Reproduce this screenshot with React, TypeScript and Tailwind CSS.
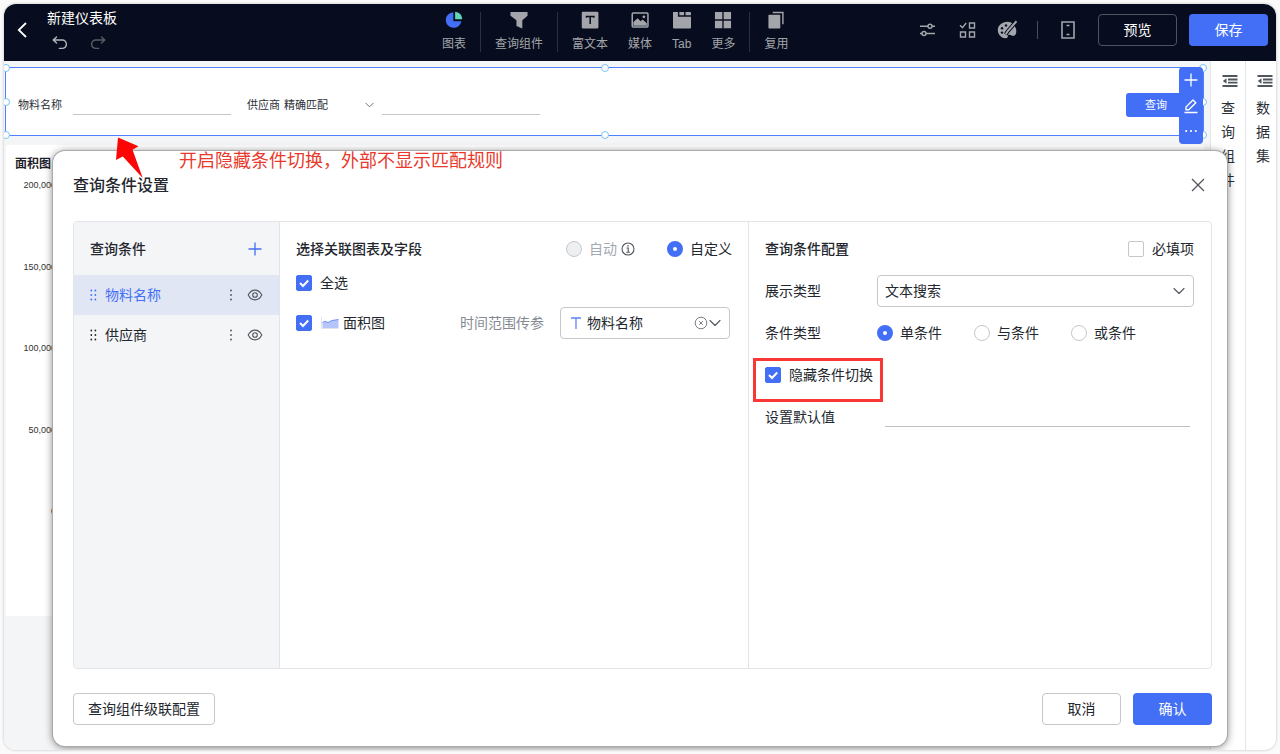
import type { ReactNode } from "react";

type IconProps = { className?: string };

const ChevronDown = ({ className = "" }: IconProps) => (
  <svg className={className} viewBox="0 0 12 8" fill="none" stroke="currentColor" strokeWidth="1.1" strokeLinecap="round" strokeLinejoin="round">
    <path d="M1 1.500 6 6.500 11 1.500" />
  </svg>
);

const Plus = ({ className = "" }: IconProps) => (
  <svg className={className} viewBox="0 0 14 14" fill="none" stroke="currentColor" strokeWidth="1.3">
    <path d="M7 .5v13M.5 7h13" />
  </svg>
);

const Undo = ({ className = "" }: IconProps) => (
  <svg className={className} viewBox="0 0 16 14" fill="none" stroke="currentColor" strokeWidth="1.4" strokeLinecap="round" strokeLinejoin="round">
    <path d="M4.500 1 1.200 4l3.300 3M1.400 4h8.800a4.200 4.200 0 0 1 0 8.400H7.400" />
  </svg>
);

const Eye = ({ className = "" }: IconProps) => (
  <svg className={className} viewBox="0 0 16 12" fill="none" stroke="currentColor" strokeWidth="1.1">
    <path d="M1.200 6C2.800 2.900 5.200 1.100 8 1.100S13.200 2.900 14.800 6C13.200 9.100 10.800 10.900 8 10.900S2.800 9.100 1.200 6Z" strokeLinejoin="round" />
    <circle cx="8" cy="6" r="2.300" />
  </svg>
);

const Kebab = ({ className = "" }: IconProps) => (
  <svg className={className} viewBox="0 0 4 12" fill="currentColor">
    <circle cx="2" cy="1.500" r=".9" />
    <circle cx="2" cy="6" r=".9" />
    <circle cx="2" cy="10.500" r=".9" />
  </svg>
);

const Grip = ({ className = "" }: IconProps) => (
  <svg className={className} viewBox="0 0 7 12" fill="currentColor">
    {[1.5, 6, 10.5].map((y) => (
      <g key={y}>
        <circle cx="1.300" cy={y} r=".9" />
        <circle cx="5.400" cy={y} r=".9" />
      </g>
    ))}
  </svg>
);

const Outdent = ({ className = "" }: IconProps) => (
  <svg className={className} viewBox="0 0 16 14" fill="currentColor">
    <path d="M.5 1h15v2H.5zM6 4.600h9.500v1.800H6zM6 7.800h9.500v1.800H6zM.5 11h15v2H.5zM4.500 4.300v5.400L.8 7z" />
  </svg>
);

const toolIcons: Record<string, ReactNode> = {
  chart: (
    <>
      <path d="M8.800 1.200A8.300 8.300 0 1 0 17.300 10.800H8.800z" fill="#436ff6" />
      <path d="M10.700 .8v8h7.500A7.800 7.800 0 0 0 10.700 .8z" fill="#5fd8b8" />
    </>
  ),
  filter: <path d="M.5 1h18v4l-5.500 4.700V18.500l-6.200-2.700v-6.100L.5 5z" />,
  text: (
    <>
      <rect x=".8" y=".8" width="17.600" height="17.600" rx="1.200" />
      <path d="M5.800 7.200V5.700h7.800v1.500M9.700 5.700v8.100" stroke="#070d1e" strokeWidth="1.600" fill="none" />
    </>
  ),
  media: (
    <>
      <rect x="1.300" y="2.200" width="16.600" height="14.600" rx="1" fill="none" stroke="currentColor" strokeWidth="1.600" />
      <path d="M2.500 15.500v-4l4.500-3.800 3.200 3.200 2-2 4.500 4v2.600z" />
      <circle cx="13.600" cy="6.200" r="1.500" />
    </>
  ),
  tab: <path d="M0 1h5.200v5.200h13.800V17.500a1 1 0 0 1-1 1H1a1 1 0 0 1-1-1zM6.700 1h5v3.500h-5zM13.200 1h4.800a1 1 0 0 1 1 1v2.500h-5.800z" />,
  more: <path d="M1 1h7.800v7.800H1zM10.200 1h7.800v7.800h-7.800zM1 10.400h7.800v7.800H1zM10.200 10.400h7.800v7.800h-7.800z" />,
  reuse: (
    <>
      <rect x="1.500" y="4" width="12.500" height="14.500" rx=".8" />
      <path d="M6 1.600h10.800v12.400" fill="none" stroke="currentColor" strokeWidth="1.500" />
    </>
  ),
};

const toolGroups = [
  [{ icon: "chart", label: "图表" }],
  [{ icon: "filter", label: "查询组件" }],
  [
    { icon: "text", label: "富文本" },
    { icon: "media", label: "媒体" },
    { icon: "tab", label: "Tab" },
    { icon: "more", label: "更多" },
  ],
  [{ icon: "reuse", label: "复用" }],
];

function IconButton({ label, children }: { label: string; children: ReactNode }) {
  return (
    <button type="button" aria-label={label} className="size-5 shrink-0 text-[#a3a6ad]">
      <svg viewBox="0 0 20 20" className="size-5" fill="none" stroke="currentColor" strokeWidth="1.4">
        {children}
      </svg>
    </button>
  );
}

function TopBar() {
  return (
    <header className="flex h-[57px] shrink-0 bg-[#070d1e] text-white">
      <div className="flex w-[438px] shrink items-start pl-3">
        <button type="button" aria-label="返回" className="mt-[18px] flex h-4 w-3 items-center justify-center">
          <svg viewBox="0 0 10 16" className="h-4 w-[10px]" fill="none" stroke="currentColor" strokeWidth="1.800">
            <path d="M9 1 1.800 8 9 15" />
          </svg>
        </button>
        <div className="ml-[19px] pt-1">
          <h1 className="text-sm leading-5">新建仪表板</h1>
          <div className="mt-2 flex gap-[22px] pl-[5px]">
            <button type="button" aria-label="撤销" className="text-[#b4b6bb]">
              <Undo className="h-[14px] w-4" />
            </button>
            <button type="button" aria-label="重做" className="text-[#5a5d66]">
              <Undo className="h-[14px] w-4 -scale-x-100" />
            </button>
          </div>
        </div>
      </div>
      <nav className="flex h-[55px] shrink-0 items-center">
        {toolGroups.map((group, i) => (
          <div key={i} className="flex items-center">
            {i > 0 && <span className="mx-[14px] h-10 w-px bg-[#2b3040]" />}
            <div className="flex gap-5">
              {group.map((t) => (
                <button type="button" key={t.label} className="flex flex-col items-center gap-[7px] text-xs leading-4 text-[#a3a5aa]">
                  <svg viewBox="0 0 19 19" className="size-[18px]" fill="currentColor">
                    {toolIcons[t.icon]}
                  </svg>
                  {t.label}
                </button>
              ))}
            </div>
          </div>
        ))}
      </nav>
      <div className="ml-auto flex h-[52px] items-center gap-5 pr-2">
        <IconButton label="参数">
          <path d="M3 6.300h8M15 6.300h3M3 13.500h2.300M9 13.500h9" />
          <circle cx="13" cy="6.300" r="2" />
          <circle cx="7" cy="13.500" r="2" />
        </IconButton>
        <IconButton label="批量">
          <path d="m3 5.200 2.500 2.500L9.200 3M12.500 3h5v5h-5zM3.500 12h5v5h-5zM12.500 12h5v5h-5z" />
        </IconButton>
        <IconButton label="主题">
          <path d="M10.500 1.800C5 1.800.8 5.500.8 10s3.600 8.300 7.800 8.300c2.200 0 2.200-1.500 2.200-2.300 0-1 .9-1.700 2.100-1.200 1.500.6 3.100 1.800 4.600.8 1.900-1.200 2.100-4.300 1.500-6.600-.9-4-4.500-7.200-8.500-7.200z" fill="currentColor" stroke="none" />
          <g fill="#070d1e" stroke="none">
            <circle cx="5" cy="8.200" r="1.200" />
            <circle cx="9" cy="5.400" r="1.200" />
            <circle cx="5" cy="12.600" r="1.200" />
          </g>
          <path d="m19.500 1.200-9.200 10.600-1.500 2.600" stroke="#070d1e" strokeWidth="4" />
          <path d="m19.500 1.200-8.700 9.900M10.800 11l-2 3.200" strokeWidth="2" />
        </IconButton>
        <span className="h-[18px] w-px bg-[#4a4e5b]" />
        <IconButton label="移动端">
          <path d="M4 2h12v16H4zM8.500 5.500h3M8.500 14.500h3" strokeWidth="1.600" />
        </IconButton>
        <div className="flex gap-3">
          <button type="button" className="h-8 w-[79px] rounded border border-[#50535e] text-sm">预览</button>
          <button type="button" className="h-8 w-[79px] rounded bg-[#436ff6] text-sm">保存</button>
        </div>
      </div>
    </header>
  );
}

function Handles() {
  const dot = "absolute size-2 rounded-full border border-[#78c4f5] bg-white";
  return (
    <>
      <span className={`${dot} -left-1 -top-1`} />
      <span className={`${dot} -top-1 left-1/2 -ml-1`} />
      <span className={`${dot} -right-1 -top-1`} />
      <span className={`${dot} -left-1 top-1/2 -mt-1`} />
      <span className={`${dot} -right-1 top-1/2 -mt-1`} />
      <span className={`${dot} -bottom-1 -left-1`} />
      <span className={`${dot} -bottom-1 left-1/2 -ml-1`} />
      <span className={`${dot} -bottom-1 -right-1`} />
    </>
  );
}

function QueryWidget() {
  const line = "h-5 w-[158px] border-b border-[#c4c6ca] bg-transparent outline-none";
  return (
    <section className="relative flex h-[69px] items-center border border-[#4f80ff] bg-white pl-3 pt-[7px] text-[11px] text-[#2b2f36]">
      <label htmlFor="q-material" className="w-[55px]">物料名称</label>
      <input id="q-material" className={line} />
      <label htmlFor="q-supplier" className="ml-4 w-[37px]">供应商</label>
      <div className="relative w-[98px]">
        <select aria-label="匹配规则" className="w-full appearance-none bg-transparent outline-none">
          <option>精确匹配</option>
        </select>
        <ChevronDown className="pointer-events-none absolute right-2 top-1/2 -mt-[3px] h-[6px] w-[9px] text-[#51565d]" />
      </div>
      <input id="q-supplier" className={line} />
      <button type="button" className="ml-auto mr-[17px] h-6 w-[60px] rounded-[3px] bg-[#436ff6] text-[11px] text-white">查询</button>
      <Handles />
      <div className="absolute -top-px right-0 flex h-[77px] w-6 flex-col items-center justify-between rounded-sm bg-[#436ff6] py-[6px] text-white">
        <button type="button" aria-label="添加"><Plus className="size-[14px]" /></button>
        <button type="button" aria-label="编辑">
          <svg viewBox="0 0 16 16" className="size-4" fill="none" stroke="currentColor" strokeWidth="1.400" strokeLinejoin="round">
            <path d="M3 11.800V9L10 2l2.800 2.800-7 7zM1.500 14.500h13" />
          </svg>
        </button>
        <button type="button" aria-label="更多操作">
          <svg viewBox="0 0 14 14" className="size-[14px]" fill="currentColor">
            <circle cx="2.200" cy="7" r="1.100" />
            <circle cx="7" cy="7" r="1.100" />
            <circle cx="11.800" cy="7" r="1.100" />
          </svg>
        </button>
      </div>
    </section>
  );
}

function Canvas() {
  return (
    <main className="min-w-0 flex-1 bg-[#f4f5f7] pl-px pr-[6px] pt-[6px]">
      <QueryWidget />
      <section className="ml-px mt-[9px] h-[471px] bg-white pl-[9px] pt-[9px]">
        <h2 className="text-xs font-bold leading-5 text-[#1d2129]">面积图</h2>
        <ol className="mt-[6px] flex h-[336px] w-[41px] flex-col justify-between text-right text-[9px] leading-[10px] text-[#333]">
          {["200,000", "150,000", "100,000", "50,000", "0"].map((v) => (
            <li key={v}>{v}</li>
          ))}
        </ol>
      </section>
    </main>
  );
}

function SideTab({ chars }: { chars: string[] }) {
  return (
    <aside className="w-[35px] shrink-0 border-l border-[#e4e5e8] bg-white pl-[10px] pt-[13px] text-sm leading-6 text-[#2b2f36] last:w-[31px]">
      <button type="button" className="flex w-4 flex-col items-start">
        <Outdent className="ml-px h-[14px] w-4 text-[#51565d]" />
        <span className="mt-2 flex flex-col">
          {chars.map((c) => (
            <span key={c}>{c}</span>
          ))}
        </span>
      </button>
    </aside>
  );
}

function Check({ label, checked = false, children }: { label: string; checked?: boolean; children?: ReactNode }) {
  return (
    <label className="flex items-center gap-2">
      <span className="grid size-4 shrink-0 place-items-center">
        <input
          type="checkbox"
          defaultChecked={checked}
          className="peer col-start-1 row-start-1 size-4 appearance-none rounded-xs border border-[#c4c7cc] bg-white checked:border-[#436ff6] checked:bg-[#436ff6]"
        />
        <svg viewBox="0 0 16 16" className="pointer-events-none col-start-1 row-start-1 hidden size-4 peer-checked:block" fill="none" stroke="#fff" strokeWidth="2">
          <path d="m4 8 3 3 5.200-5.500" />
        </svg>
      </span>
      {children}
      {label}
    </label>
  );
}

function Radio({ name, label, checked = false, disabled = false }: { name: string; label: string; checked?: boolean; disabled?: boolean }) {
  return (
    <label className="flex items-center gap-[7px] has-disabled:text-[#a4a8b0]">
      <input
        type="radio"
        name={name}
        defaultChecked={checked}
        disabled={disabled}
        className="size-4 shrink-0 appearance-none rounded-full border border-[#c4c7cc] bg-white checked:border-[6px] checked:border-[#436ff6] disabled:bg-[#eeeff1]"
      />
      {label}
    </label>
  );
}

function ConditionList() {
  return (
    <div className="w-[206px] shrink-0 border-r border-[#e2e4e8] bg-[#f4f5f7]">
      <div className="flex h-[53px] items-center justify-between px-4">
        <h3 className="font-medium">查询条件</h3>
        <button type="button" aria-label="新增查询条件" className="mr-px text-[#436ff6]">
          <Plus className="size-[14px]" />
        </button>
      </div>
      <ul>
        {["物料名称", "供应商"].map((name) => (
          <li key={name} className="flex h-10 items-center px-4 first:bg-[#e1e6f5] first:text-[#436ff6]">
            <Grip className="h-3 w-[7px]" />
            <span className="ml-2">{name}</span>
            <button type="button" aria-label={`${name}操作`} className="ml-auto text-[#4e535b]">
              <Kebab className="h-3 w-1" />
            </button>
            <button type="button" aria-label={`显示${name}`} className="ml-[14px] text-[#51565d]">
              <Eye className="h-3 w-4" />
            </button>
          </li>
        ))}
      </ul>
    </div>
  );
}

function FieldMapping() {
  return (
    <div className="min-w-0 flex-1 px-4">
      <div className="flex h-[53px] items-center">
        <h3 className="font-medium">选择关联图表及字段</h3>
        <div className="ml-auto flex items-center">
          <Radio name="mode" label="自动" disabled />
          <svg viewBox="0 0 14 14" className="ml-1 size-[14px]" fill="none" stroke="#51565d" strokeWidth="1.100">
            <circle cx="7" cy="7" r="6" />
            <path d="M5.500 6h1.700v4M5.300 10.200h3.600M6.300 3.900h1.500" />
          </svg>
          <span className="w-8" />
          <Radio name="mode" label="自定义" checked />
        </div>
      </div>
      <div className="flex h-4 items-center">
        <Check label="全选" checked />
      </div>
      <div className="mt-4 flex h-8 items-center">
        <Check label="面积图" checked>
          <svg viewBox="0 0 18 12" className="ml-px -mr-1 h-3 w-[18px]">
            <path d="M1.500 5.500 4 4.200l3 1.300 4-2 6.500-1V11h-16z" fill="#b5c5fb" />
            <path d="M1.500 5.500 4 4.200l3 1.300 4-2 6.500-1" fill="none" stroke="#6f92f5" />
            <path d="M.5 0v11.500h17" fill="none" stroke="#dfe3ea" />
          </svg>
        </Check>
        <label htmlFor="field" className="ml-auto text-[#868a92]">时间范围传参</label>
        <div className="relative ml-4 mr-[2px] w-[170px]">
          <select id="field" className="h-8 w-full appearance-none rounded border border-[#c4c7cc] bg-white pl-[26px] outline-none">
            <option>物料名称</option>
          </select>
          <svg viewBox="0 0 12 14" className="pointer-events-none absolute left-[10px] top-[9px] h-[14px] w-3" fill="none" stroke="#5c82f7" strokeWidth="1.300">
            <path d="M1 2h10M6 2v11" />
          </svg>
          <button type="button" aria-label="清除" className="absolute right-[22px] top-[9px] size-[14px]">
            <svg viewBox="0 0 14 14" className="size-[14px]" fill="none" stroke="#7b8088">
              <circle cx="7" cy="7" r="5.800" />
              <path d="m5.200 5.200 3.600 3.600M8.800 5.200 5.200 8.800" />
            </svg>
          </button>
          <ChevronDown className="pointer-events-none absolute right-[9px] top-3 h-2 w-3 text-[#51565d]" />
        </div>
      </div>
    </div>
  );
}

function ConditionConfig() {
  return (
    <div className="w-[463px] shrink-0 border-l border-[#e2e4e8] pl-4 pr-[17px]">
      <div className="flex h-[53px] items-center justify-between">
        <h3 className="font-medium">查询条件配置</h3>
        <Check label="必填项" />
      </div>
      <div className="flex flex-col gap-[10px]">
        <div className="flex h-8 items-center">
          <label htmlFor="display" className="w-28 shrink-0">展示类型</label>
          <div className="relative flex-1">
            <select id="display" className="h-8 w-full appearance-none rounded border border-[#c4c7cc] bg-white px-[7px] outline-none">
              <option>文本搜索</option>
            </select>
            <ChevronDown className="pointer-events-none absolute right-[9px] top-3 h-2 w-3 text-[#51565d]" />
          </div>
        </div>
        <div role="radiogroup" aria-label="条件类型" className="flex h-8 items-center">
          <span className="w-28 shrink-0">条件类型</span>
          <div className="flex gap-8">
            <Radio name="kind" label="单条件" checked />
            <Radio name="kind" label="与条件" />
            <Radio name="kind" label="或条件" />
          </div>
        </div>
        <div className="relative flex h-8 items-center">
          <Check label="隐藏条件切换" checked />
          <span className="pointer-events-none absolute -left-3 -top-px h-11 w-[130px] border-3 border-[#f93735]" />
        </div>
        <div className="flex h-8 items-center">
          <label htmlFor="default" className="w-[120px] shrink-0">设置默认值</label>
          <input id="default" className="mr-1 h-5 flex-1 border-b border-[#bfc1c5] bg-transparent outline-none" />
        </div>
      </div>
    </div>
  );
}

function SettingsDialog() {
  return (
    <div role="dialog" aria-labelledby="dialog-title" className="flex flex-1 flex-col rounded-xl bg-white pl-5 pr-[15px] text-sm text-[#23272e] shadow-[0_1px_8px_rgba(0,0,0,0.55)] ring-1 ring-[#aaa]">
      <div className="flex h-[70px] shrink-0 items-center justify-between">
        <h2 id="dialog-title" className="text-base font-medium">查询条件设置</h2>
        <button type="button" aria-label="关闭" className="mb-[2px] mr-[7px] text-[#51565d]">
          <svg viewBox="0 0 14 14" className="size-[14px]" fill="none" stroke="currentColor" strokeWidth="1.300">
            <path d="m1 1 12 12M13 1 1 13" />
          </svg>
        </button>
      </div>
      <div className="flex flex-1 overflow-hidden rounded border border-[#e2e4e8]">
        <ConditionList />
        <FieldMapping />
        <ConditionConfig />
      </div>
      <div className="flex h-[77px] shrink-0 items-start gap-3 pt-6">
        <button type="button" className="mr-auto h-8 w-[142px] rounded border border-[#c4c7cc]">查询组件级联配置</button>
        <button type="button" className="h-8 w-[79px] rounded border border-[#c4c7cc]">取消</button>
        <button type="button" className="h-8 w-[79px] rounded bg-[#436ff6] text-white">确认</button>
      </div>
    </div>
  );
}

export default function App() {
  return (
    <div className="h-screen bg-[#fafafa] p-1 font-['Liberation_Sans','Noto_Sans_CJK_SC',sans-serif]">
      <div className="relative flex h-full flex-col overflow-hidden rounded-xl bg-white shadow-[0_0_3px_rgba(0,0,0,0.25)]">
        <TopBar />
        <div className="flex min-h-0 flex-1">
          <Canvas />
          <SideTab chars={["查", "询", "组", "件"]} />
          <SideTab chars={["数", "据", "集"]} />
        </div>
        <div className="absolute inset-0 flex px-[49px] pb-1 pt-[147px]">
          <SettingsDialog />
        </div>
        <svg viewBox="0 0 28 42" className="pointer-events-none absolute left-[112px] top-[133px] h-[42px] w-7" fill="#fb0505">
          <path d="M2 .5 22.500 9.300 16.500 12.700 26.700 41 6.800 19.500 0 23z" />
        </svg>
        <p className="pointer-events-none absolute left-[175px] top-[143px] text-lg leading-7 text-[#e8392c]">开启隐藏条件切换，外部不显示匹配规则</p>
      </div>
    </div>
  );
}
